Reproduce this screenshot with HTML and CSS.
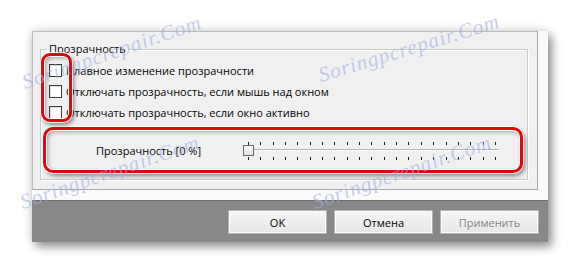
FILE: index.html
```html
<!DOCTYPE html>
<html lang="ru">
<head>
<meta charset="utf-8">
<title>Прозрачность</title>
<link rel="stylesheet" href="styles.css">
</head>
<body>
<div class="stage">
  <div class="dialog">
    <div class="panel">
      <fieldset class="group">
        <legend>Прозрачность</legend>
        <div class="options">
          <label class="option"><input type="checkbox" class="check"><span>Плавное изменение прозрачности</span></label>
          <label class="option"><input type="checkbox" class="check"><span>Отключать прозрачность, если мышь над окном</span></label>
          <label class="option"><input type="checkbox" class="check"><span>Отключать прозрачность, если окно активно</span></label>
          <div class="mark mark-checks"></div>
        </div>
        <div class="slider-row mark-frame">
          <span class="slider-label">Прозрачность [0 %]</span>
          <div class="slider">
            <div class="ticks"><span></span><span></span><span></span><span></span><span></span><span></span><span></span><span></span><span></span><span></span><span></span><span></span><span></span><span></span><span></span><span></span><span></span><span></span><span></span><span></span><span></span></div>
            <div class="track"><span class="thumb"></span></div>
            <div class="ticks"><span></span><span></span><span></span><span></span><span></span><span></span><span></span><span></span><span></span><span></span><span></span><span></span><span></span><span></span><span></span><span></span><span></span><span></span><span></span><span></span><span></span></div>
          </div>
        </div>
      </fieldset>
    </div>
    <div class="footer">
      <button class="btn">OK</button>
      <button class="btn">Отмена</button>
      <button class="btn" disabled>Применить</button>
    </div>
  </div>
  <span class="wm wm1">Soringpcrepair.Com</span>
  <span class="wm wm2">Soringpcrepair.Com</span>
  <span class="wm wm3">Soringpcrepair.Com</span>
  <span class="wm wm4">Soringpcrepair.Com</span>
</div>
</body>
</html>
```
FILE: styles.css
```css
* { box-sizing: border-box; }
html, body { margin: 0; background: #fff; }
body {
  font-family: "Open Sans", "Noto Sans", sans-serif;
  font-size: 11px;
  color: #050505;
}
.stage {
  position: relative;
  width: 581px;
  height: 274px;
  overflow: hidden;
  padding: 31px 0 0 32px;
}
.dialog {
  width: 516px;
  height: 211px;
  background: #fafafa;
  display: flex;
  flex-direction: column;
  box-shadow: 0 0 10px rgba(0,0,0,.16), 4px 5px 9px rgba(0,0,0,.38);
}
.panel {
  height: 159px;
  margin-right: 10px;
  background: #f0f0f0;
  border-top: 1px solid #bdbdbd;
  border-left: 1px solid #bdbdbd;
  border-right: 1px solid #a8a8a8;
  border-bottom: 1px solid #a8a8a8;
  padding: 9px 9px 0 7px;
}
.group {
  margin: 0;
  padding: 3px 4px 6px 2px;
  border: 1px solid #cbcbcb;
  box-shadow: 1px 1px 0 #fff, inset 1px 1px 0 #fff;
  min-width: 0;
}
.group legend {
  margin-left: 4px;
  padding: 0 2px;
  line-height: 16px;
}
.options {
  position: relative;
  display: flex;
  flex-direction: column;
}
.option {
  display: flex;
  align-items: center;
  height: 21px;
  padding-left: 6px;
  gap: 4px;
}
.check {
  appearance: none;
  -webkit-appearance: none;
  margin: 0;
  width: 13px;
  height: 13px;
  border: 1px solid #3a3a3a;
  background: #fff;
  box-shadow: inset 1px 1px 0 #e4e4e4;
}
.mark, .mark-frame {
  border: 3px solid #e3070b;
  border-radius: 9px;
  box-shadow: 0 0 0 1px rgba(255,255,255,.85), 2px 3px 4px rgba(0,0,0,.45),
              inset 0 0 0 1px #fff, inset 2px 2px 4px rgba(0,0,0,.35);
}
.mark-checks {
  position: absolute;
  left: -2px;
  top: -7px;
  width: 31px;
  height: 69px;
}
.slider-row {
  margin-top: 4px;
  height: 46px;
  display: flex;
  align-items: center;
  padding-left: 50px;
  border-radius: 10px;
}
.slider-label {
  width: 147px;
  flex: none;
}
.slider {
  width: 258px;
  margin-top: 2px;
  display: flex;
  flex-direction: column;
}
.ticks {
  display: flex;
  justify-content: space-between;
  padding: 0 5px;
  height: 3px;
}
.ticks span {
  width: 1px;
  height: 3px;
  background: #1e1e1e;
}
.track {
  height: 11px;
  margin-bottom: 1px;
  background:
    linear-gradient(#b4b4b4, #b4b4b4) no-repeat 2px 4px / 254px 1px,
    linear-gradient(#fff, #fff) no-repeat 2px 5px / 254px 1px;
}
.thumb {
  display: block;
  width: 11px;
  height: 11px;
  border: 1px solid #6b6b6b;
  background: linear-gradient(#fdfdfd, #e0e0e0);
}
.footer {
  margin-top: 10px;
  height: 42px;
  background: #888;
  border-top: 1px solid #6f6f6f;
  display: flex;
  justify-content: flex-end;
  gap: 7px;
  padding: 9px 9px 0 0;
}
.btn {
  width: 99px;
  height: 24px;
  padding: 0;
  border: 1px solid #b3b3b3;
  background: linear-gradient(#f6f6f6, #e6e6e6);
  box-shadow: inset 0 0 0 1px #fcfcfc;
  font: inherit;
  color: #050505;
}
.btn:disabled { color: #8a8484; }
.wm {
  position: absolute;
  font-family: "Liberation Serif", serif;
  font-style: italic;
  font-size: 21px;
  line-height: 20px;
  letter-spacing: 1px;
  white-space: nowrap;
  color: rgba(160, 175, 225, .6);
  transform-origin: 0 100%;
  transform: rotate(-19deg);
}
.wm1 { left: 26px; top: 72px; }
.wm2 { left: 322px; top: 65px; transform: rotate(-17deg); }
.wm3 { left: 24px; top: 192px; }
.wm4 { left: 316px; top: 192px; }
```
